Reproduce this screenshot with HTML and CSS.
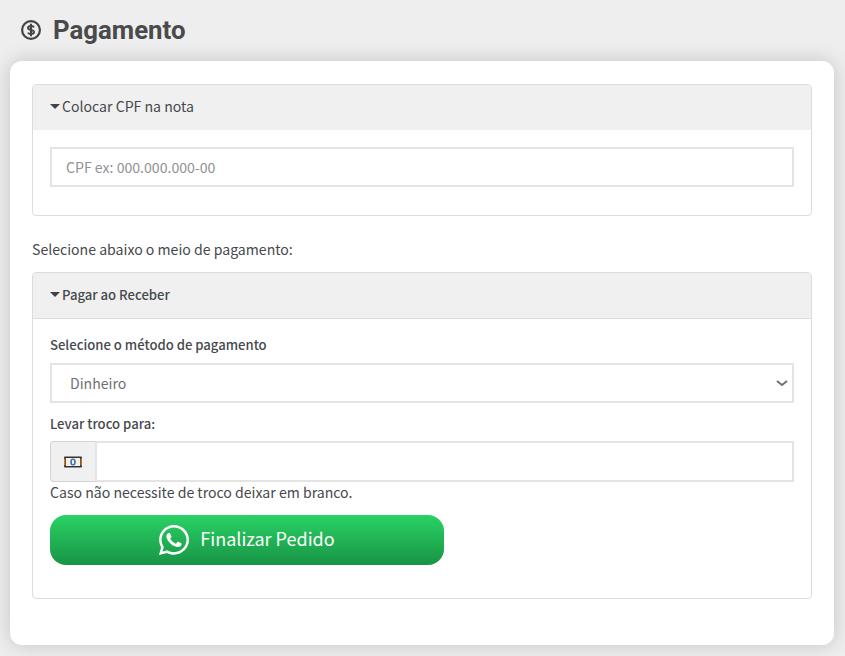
FILE: index.html
```html
<!DOCTYPE html>
<html lang="pt-BR">
<head>
  <meta charset="UTF-8">
  <title>Pagamento</title>
  <link rel="stylesheet" href="styles.css">
</head>
<body>
<h1 class="title">
  <svg class="title-icon" viewBox="0 0 20 20" aria-hidden="true">
    <circle cx="10" cy="10" r="8.9" fill="none" stroke="#444" stroke-width="2.200"/>
    <path d="M13 7.400c-.4-1-1.500-1.500-3-1.500-1.700 0-3 .8-3 2 0 2.800 6 1.400 6 4.200 0 1.200-1.300 2-3 2-1.500 0-2.600-.5-3-1.500" fill="none" stroke="#444" stroke-width="2"/>
    <path d="M10 3.800v12.400" fill="none" stroke="#444" stroke-width="2"/>
  </svg>
  Pagamento
</h1>

<div class="card">
  <div class="panel panel-cpf">
    <div class="panel-head"><span class="caret"></span>Colocar CPF na nota</div>
    <div class="panel-body">
      <input class="field" type="text" placeholder="CPF ex: 000.000.000-00">
    </div>
  </div>

  <p class="hint">Selecione abaixo o meio de pagamento:</p>

  <div class="panel">
    <div class="panel-head panel-head-line"><span class="caret"></span><b class="head-bold">Pagar ao Receber</b></div>
    <div class="panel-body panel-body-pay">
      <label class="label">Selecione o método de pagamento</label>
      <select class="field field-select">
        <option>Dinheiro</option>
      </select>
      <label class="label label-troco">Levar troco para:</label>
      <div class="group">
        <span class="group-addon">
          <svg class="money" viewBox="0 0 18 12" aria-hidden="true">
            <rect x="0" y="0.500" width="18" height="11" rx="1" fill="#30343a"/>
            <rect x="2" y="2" width="14" height="8" fill="#f5f0e4"/>
            <path d="M0 2.500h1.500v7H0zM16.500 2.500H18v7h-1.500z" fill="#c9772a"/>
            <ellipse cx="9" cy="6" rx="2.800" ry="3.500" fill="#3d6fb0"/>
            <ellipse cx="9" cy="6" rx="1.200" ry="2.200" fill="#f5f0e4"/>
          </svg>
        </span>
        <input class="field group-input" type="text">
      </div>
      <div class="note">Caso não necessite de troco deixar em branco.</div>
      <button class="btn-finish" type="button">
        <svg class="wa" viewBox="0 32 448 448" aria-hidden="true"><path fill="#fff" d="M380.900 97.100C339 55.100 283.200 32 223.900 32c-122.400 0-222 99.600-222 222 0 39.100 10.200 77.300 29.600 111L0 480l117.700-30.900c32.400 17.700 68.900 27 106.100 27h.1c122.300 0 224.100-99.600 224.100-222 0-59.300-25.200-115-67.100-157zm-157 341.600c-33.200 0-65.700-8.900-94-25.700l-6.700-4-69.800 18.300L72 359.200l-4.400-7c-18.500-29.400-28.200-63.300-28.200-98.200 0-101.700 82.800-184.500 184.600-184.500 49.300 0 95.600 19.200 130.400 54.100 34.800 34.900 56.200 81.200 56.100 130.500 0 101.800-84.900 184.600-186.600 184.600zm101.200-138.200c-5.500-2.800-32.800-16.200-37.900-18-5.100-1.900-8.800-2.800-12.500 2.800-3.700 5.600-14.300 18-17.600 21.800-3.200 3.700-6.500 4.200-12 1.400-32.600-16.300-54-29.100-75.500-66-5.700-9.800 5.700-9.100 16.300-30.300 1.800-3.700.9-6.900-.5-9.700-1.400-2.800-12.500-30.100-17.100-41.200-4.500-10.800-9.100-9.300-12.500-9.500-3.200-.2-6.900-.2-10.600-.2-3.700 0-9.700 1.400-14.800 6.900-5.100 5.600-19.400 19-19.400 46.300 0 27.300 19.900 53.700 22.600 57.400 2.800 3.700 39.100 59.700 94.800 83.800 35.200 15.200 49 16.500 66.600 13.900 10.700-1.600 32.800-13.400 37.400-26.400 4.600-13 4.600-24.100 3.200-26.400-1.300-2.500-5-3.900-10.500-6.600z"/></svg>
        Finalizar Pedido
      </button>
    </div>
  </div>
</div>
</body>
</html>
```

FILE: styles.css
```css
* {
  box-sizing: border-box;
  margin: 0;
  padding: 0;
}

html, body {
  height: 100%;
  overflow: hidden;
}

body {
  background-color: #eeeeee;
  color: #45494d;
  font-family: "Noto Sans CJK SC", "Noto Sans", sans-serif;
  font-size: 14.1px;
  line-height: 22px;
  padding: 0 11px 0 10px;
}

.title {
  display: flex;
  align-items: center;
  gap: 12px;
  height: 61px;
  padding: 0 0 1px 11px;
  color: #4a4a4a;
  font-family: Roboto, sans-serif;
  font-size: 25.800px;
  font-weight: 700;
}

.title-icon {
  width: 20px;
  height: 20px;
}

.card {
  height: 584px;
  padding: 23px 22px;
  background-color: #fff;
  border-radius: 12px;
  box-shadow: 0 0 20px rgba(0, 0, 0, .18);
}

.panel {
  border: 1px solid #dcdcdc;
  border-radius: 4px;
}

.panel-cpf {
  height: 132px;
}

.panel-head {
  display: flex;
  align-items: center;
  height: 45px;
  padding: 0 0 3px 17px;
  background-color: #f0f0f0;
  border-radius: 3px 3px 0 0;
}

.panel-head-line {
  height: 46px;
  padding-bottom: 2px;
  border-bottom: 1px solid #dcdcdc;
}

.head-bold {
  font-size: 13.1px;
  font-weight: 500;
}

.caret {
  width: 0;
  height: 0;
  margin-right: 2px;
  border-top: 5px solid #3f4347;
  border-left: 5px solid transparent;
  border-right: 5px solid transparent;
}

.panel-body {
  padding: 17px 17px 0;
}

.panel-body-pay {
  padding-top: 15px;
  height: 279px;
}

.field {
  display: block;
  width: 100%;
  height: 40px;
  padding: 0 14px;
  background-color: #fff;
  border: 2px solid #e4e4e4;
  border-radius: 0;
  color: #6d7175;
  font-family: inherit;
  font-size: 14.1px;
  outline: none;
}

.field::placeholder {
  color: #8f9296;
  opacity: 1;
}

.field-select {
  padding-left: 18px;
  appearance: none;
  background-image: url("data:image/svg+xml,%3Csvg xmlns='http://www.w3.org/2000/svg' viewBox='0 0 12 6'%3E%3Cpath d='M1 1l5 4 5-4' fill='none' stroke='%236b7280' stroke-width='2'/%3E%3C/svg%3E");
  background-repeat: no-repeat;
  background-position: right 4px center;
  background-size: 12px 6px;
}

.hint {
  margin: 22px 0 12px;
}

.label {
  display: block;
  margin-bottom: 7px;
  font-size: 13.1px;
  font-weight: 500;
}

.label-troco {
  margin-top: 10px;
  margin-bottom: 6px;
}

.group {
  display: flex;
  height: 41px;
}

.group-addon {
  display: flex;
  align-items: center;
  justify-content: center;
  width: 46px;
  padding-right: 2px;
  background-color: #f0f0f0;
  border: 1px solid #d4d4d4;
  border-right: 0;
  border-radius: 4px 0 0 4px;
}

.money {
  width: 18px;
  height: 12px;
}

.group-input {
  flex: 1;
  width: auto;
  height: 41px;
  margin-left: -1px;
}

.note {
  line-height: 20px;
}

.btn-finish {
  display: flex;
  align-items: center;
  justify-content: center;
  gap: 11px;
  width: 394px;
  height: 50px;
  margin-top: 13px;
  padding-bottom: 4px;
  background: linear-gradient(180deg, #2ad265, #189445);
  border: 0;
  border-radius: 16px;
  color: #fff;
  font-family: inherit;
  font-size: 18px;
  font-weight: 400;
}

.wa {
  width: 30px;
  height: 30px;
  margin-top: 4px;
}
```
